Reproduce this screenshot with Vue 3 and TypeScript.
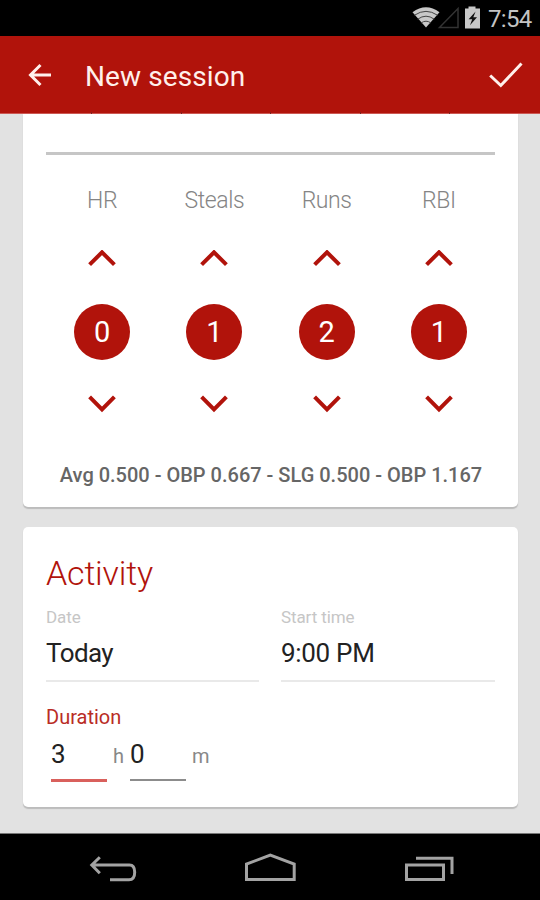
<script setup lang="ts">
import { ref } from 'vue'

interface Counter {
  label: string
  value: number
}

const counters = ref<Counter[]>([
  { label: 'HR', value: 0 },
  { label: 'Steals', value: 1 },
  { label: 'Runs', value: 2 },
  { label: 'RBI', value: 1 },
])

function step(counter: Counter, delta: number): void {
  counter.value = Math.max(0, counter.value + delta)
}
</script>

<template>
  <div class="screen">
    <div class="status">
      <svg class="status-icons" width="72" height="36" viewBox="0 0 72 36">
        <path d="M0.500 12.200Q14 2.500 27.500 12.200L14 27.500Z" fill="#c8c8c8" />
        <path d="M2.500 15.200Q14 7.500 25.500 15.200M5.700 19.200Q14 13.200 22.300 19.200M9 23Q14 19.400 19 23" fill="none" stroke="#444" stroke-width="1" />
        <path d="M27.500 27.500L46 8.500V27.500Z" fill="none" stroke="#333" stroke-width="1.5" />
        <path d="M53 8.600H56.500V6.500H63.500V8.600H68V28.500H53Z" fill="#c8c8c8" />
        <path d="M63.600 11.500L56.600 19.300H60.200L58 25.200L65 17.200H61.300Z" fill="#111" />
      </svg>
      <span class="clock">7:54</span>
    </div>

    <header class="bar">
      <svg class="back" width="24" height="24" viewBox="0 0 24 24">
        <path d="M24 12H3.500M13.500 2L3.500 12L13.500 22" />
      </svg>
      <h1 class="title">New session</h1>
      <svg class="check" width="34" height="26" viewBox="0 0 34 26">
        <path d="M1.200 13.500L11.800 23.500L32.500 1.500" />
      </svg>
      <div class="ticks"><i v-for="n in 5" :key="n"></i></div>
    </header>

    <main class="content">
      <section class="card stats">
        <div class="rule"></div>
        <div class="counters">
          <div v-for="c in counters" :key="c.label" class="counter">
            <span class="name">{{ c.label }}</span>
            <svg class="chevron" width="30" height="18" viewBox="0 0 30 18" @click="step(c, 1)">
              <path d="M2.600 14.700L15 2.300L27.400 14.700" />
            </svg>
            <span class="value">{{ c.value }}</span>
            <svg class="chevron" width="30" height="18" viewBox="0 0 30 18" @click="step(c, -1)">
              <path d="M2.600 1.900L15 14.300L27.400 1.900" />
            </svg>
          </div>
        </div>
        <p class="summary"><span>Avg 0.500 - OBP 0.667 - SLG 0.500 - OBP 1.167</span></p>
      </section>

      <section class="card activity">
        <h2 class="heading">Activity</h2>
        <div class="fields">
          <div class="field">
            <span class="caption">Date</span>
            <span class="entry">Today</span>
          </div>
          <div class="field">
            <span class="caption">Start time</span>
            <span class="entry time">9:00 PM</span>
          </div>
        </div>
        <div class="duration-label">Duration</div>
        <div class="duration">
          <span class="amount focused">3</span>
          <span class="unit">h</span>
          <span class="amount">0</span>
          <span class="unit">m</span>
        </div>
      </section>
    </main>

    <nav class="nav">
      <svg width="540" height="66" viewBox="0 0 540 66">
        <g fill="none" stroke="#a3a3a3" stroke-width="3">
          <path d="M92 31H129.500Q134.700 31 134.700 38.300Q134.700 45.800 129 45.800H110M99.800 23.200L91.800 31L99.800 39.200" />
          <path d="M246.500 45.500V30L270.300 21.200L294.200 30V45.500Z" />
          <path d="M406.500 31H443.500V45.500H406.500ZM416 24.300H452V40" />
        </g>
      </svg>
    </nav>
  </div>
</template>

<style>
body {
  margin: 0;
  background: #000;
}
</style>

<style scoped>
.screen {
  width: 540px;
  height: 900px;
  overflow: hidden;
  display: flex;
  flex-direction: column;
  font-family: Roboto, "Liberation Sans", sans-serif;
  background: #e2e2e2;
}

.status {
  flex: 0 0 36px;
  display: flex;
  align-items: center;
  justify-content: flex-end;
  box-sizing: border-box;
  padding-right: 8px;
  background: #000;
  color: #c4c4c4;
}

.status-icons {
  margin-right: 4px;
}

.clock {
  width: 44px;
  padding-top: 2px;
  font-size: 24px;
  line-height: 34px;
  letter-spacing: -0.7px;
  white-space: nowrap;
}

.bar {
  position: relative;
  flex: 0 0 78px;
  box-sizing: border-box;
  display: flex;
  align-items: center;
  padding: 0 17px 0 27px;
  background: #b1130b;
  border-bottom: 1px solid #cc5853;
}

.bar svg {
  fill: none;
  stroke: #fff0ec;
  stroke-width: 3;
}

.title {
  flex: 1;
  margin: 5px 0 0 34px;
  color: #fff0ec;
  font-size: 28px;
  font-weight: 400;
  letter-spacing: 0.1px;
  line-height: 36px;
}

.ticks {
  position: absolute;
  left: 91px;
  bottom: -1px;
  width: 359px;
  display: flex;
  justify-content: space-between;
}

.ticks i {
  width: 1px;
  height: 2px;
  background: #7f211d;
}

.content {
  flex: 0 0 720px;
  box-sizing: border-box;
  padding: 0 22px 0 23px;
  border-bottom: 1px solid #777;
  display: flex;
  flex-direction: column;
  gap: 20px;
}

.card {
  box-sizing: border-box;
  padding: 0 23px;
  background: #fff;
  border-radius: 5px;
  box-shadow: 0 1.500px 1px #bcbcbc;
}

.stats {
  height: 393px;
  padding-top: 38px;
  border-radius: 0 0 5px 5px;
}

.rule {
  height: 3px;
  background: #c6c6c6;
}

.counters {
  display: grid;
  grid-template-columns: repeat(4, 1fr);
}

.counter {
  display: flex;
  flex-direction: column;
  align-items: center;
}

.name {
  margin-top: 32px;
  font-size: 23px;
  font-weight: 300;
  letter-spacing: -0.4px;
  line-height: 28px;
  color: #858585;
}

.chevron {
  fill: none;
  stroke: #b1130b;
  stroke-width: 4;
}

.name + .chevron {
  margin-top: 35px;
}

.value {
  width: 56px;
  height: 56px;
  margin: 36px 0 35px;
  border-radius: 50%;
  background: #b1130b;
  color: #fff;
  font-size: 29px;
  line-height: 57px;
  text-align: center;
}

.summary {
  margin: 48px 0 0;
  padding-left: 1px;
  text-align: center;
  color: #666;
  font-size: 20px;
  font-weight: 500;
  line-height: 28px;
  white-space: nowrap;
}

.activity {
  height: 280px;
  padding-top: 26px;
}

.heading {
  margin: 0;
  color: #b1130b;
  font-size: 34px;
  font-weight: 300;
  letter-spacing: -0.2px;
  line-height: 40px;
}

.fields {
  display: grid;
  grid-template-columns: 213px 214px;
  gap: 22px;
}

.field {
  height: 89px;
  box-sizing: border-box;
  padding-top: 14px;
  display: flex;
  flex-direction: column;
  border-bottom: 2px solid #e9e9e9;
}

.caption {
  font-size: 17px;
  line-height: 20px;
  letter-spacing: -0.1px;
  color: #c6c6c6;
}

.entry {
  margin-top: 10px;
  font-size: 26px;
  line-height: 32px;
  letter-spacing: -0.6px;
  color: #222;
}

.time {
  letter-spacing: -0.3px;
}

.duration-label {
  margin-top: 23px;
  color: #b92c25;
  font-size: 20px;
  line-height: 24px;
}

.duration {
  display: flex;
  padding-left: 5px;
  color: #222;
}

.amount {
  width: 56px;
  height: 52px;
  box-sizing: border-box;
  border-bottom: 2px solid #8c8c8c;
  font-size: 26px;
  line-height: 50px;
}

.focused {
  height: 53px;
  border-bottom: 3px solid #d9605c;
}

.unit {
  width: 17px;
  margin-left: 6px;
  color: #888;
  font-size: 20px;
  line-height: 54px;
}

.nav {
  flex: 0 0 66px;
  background: #000;
}

.nav svg {
  display: block;
}
</style>
